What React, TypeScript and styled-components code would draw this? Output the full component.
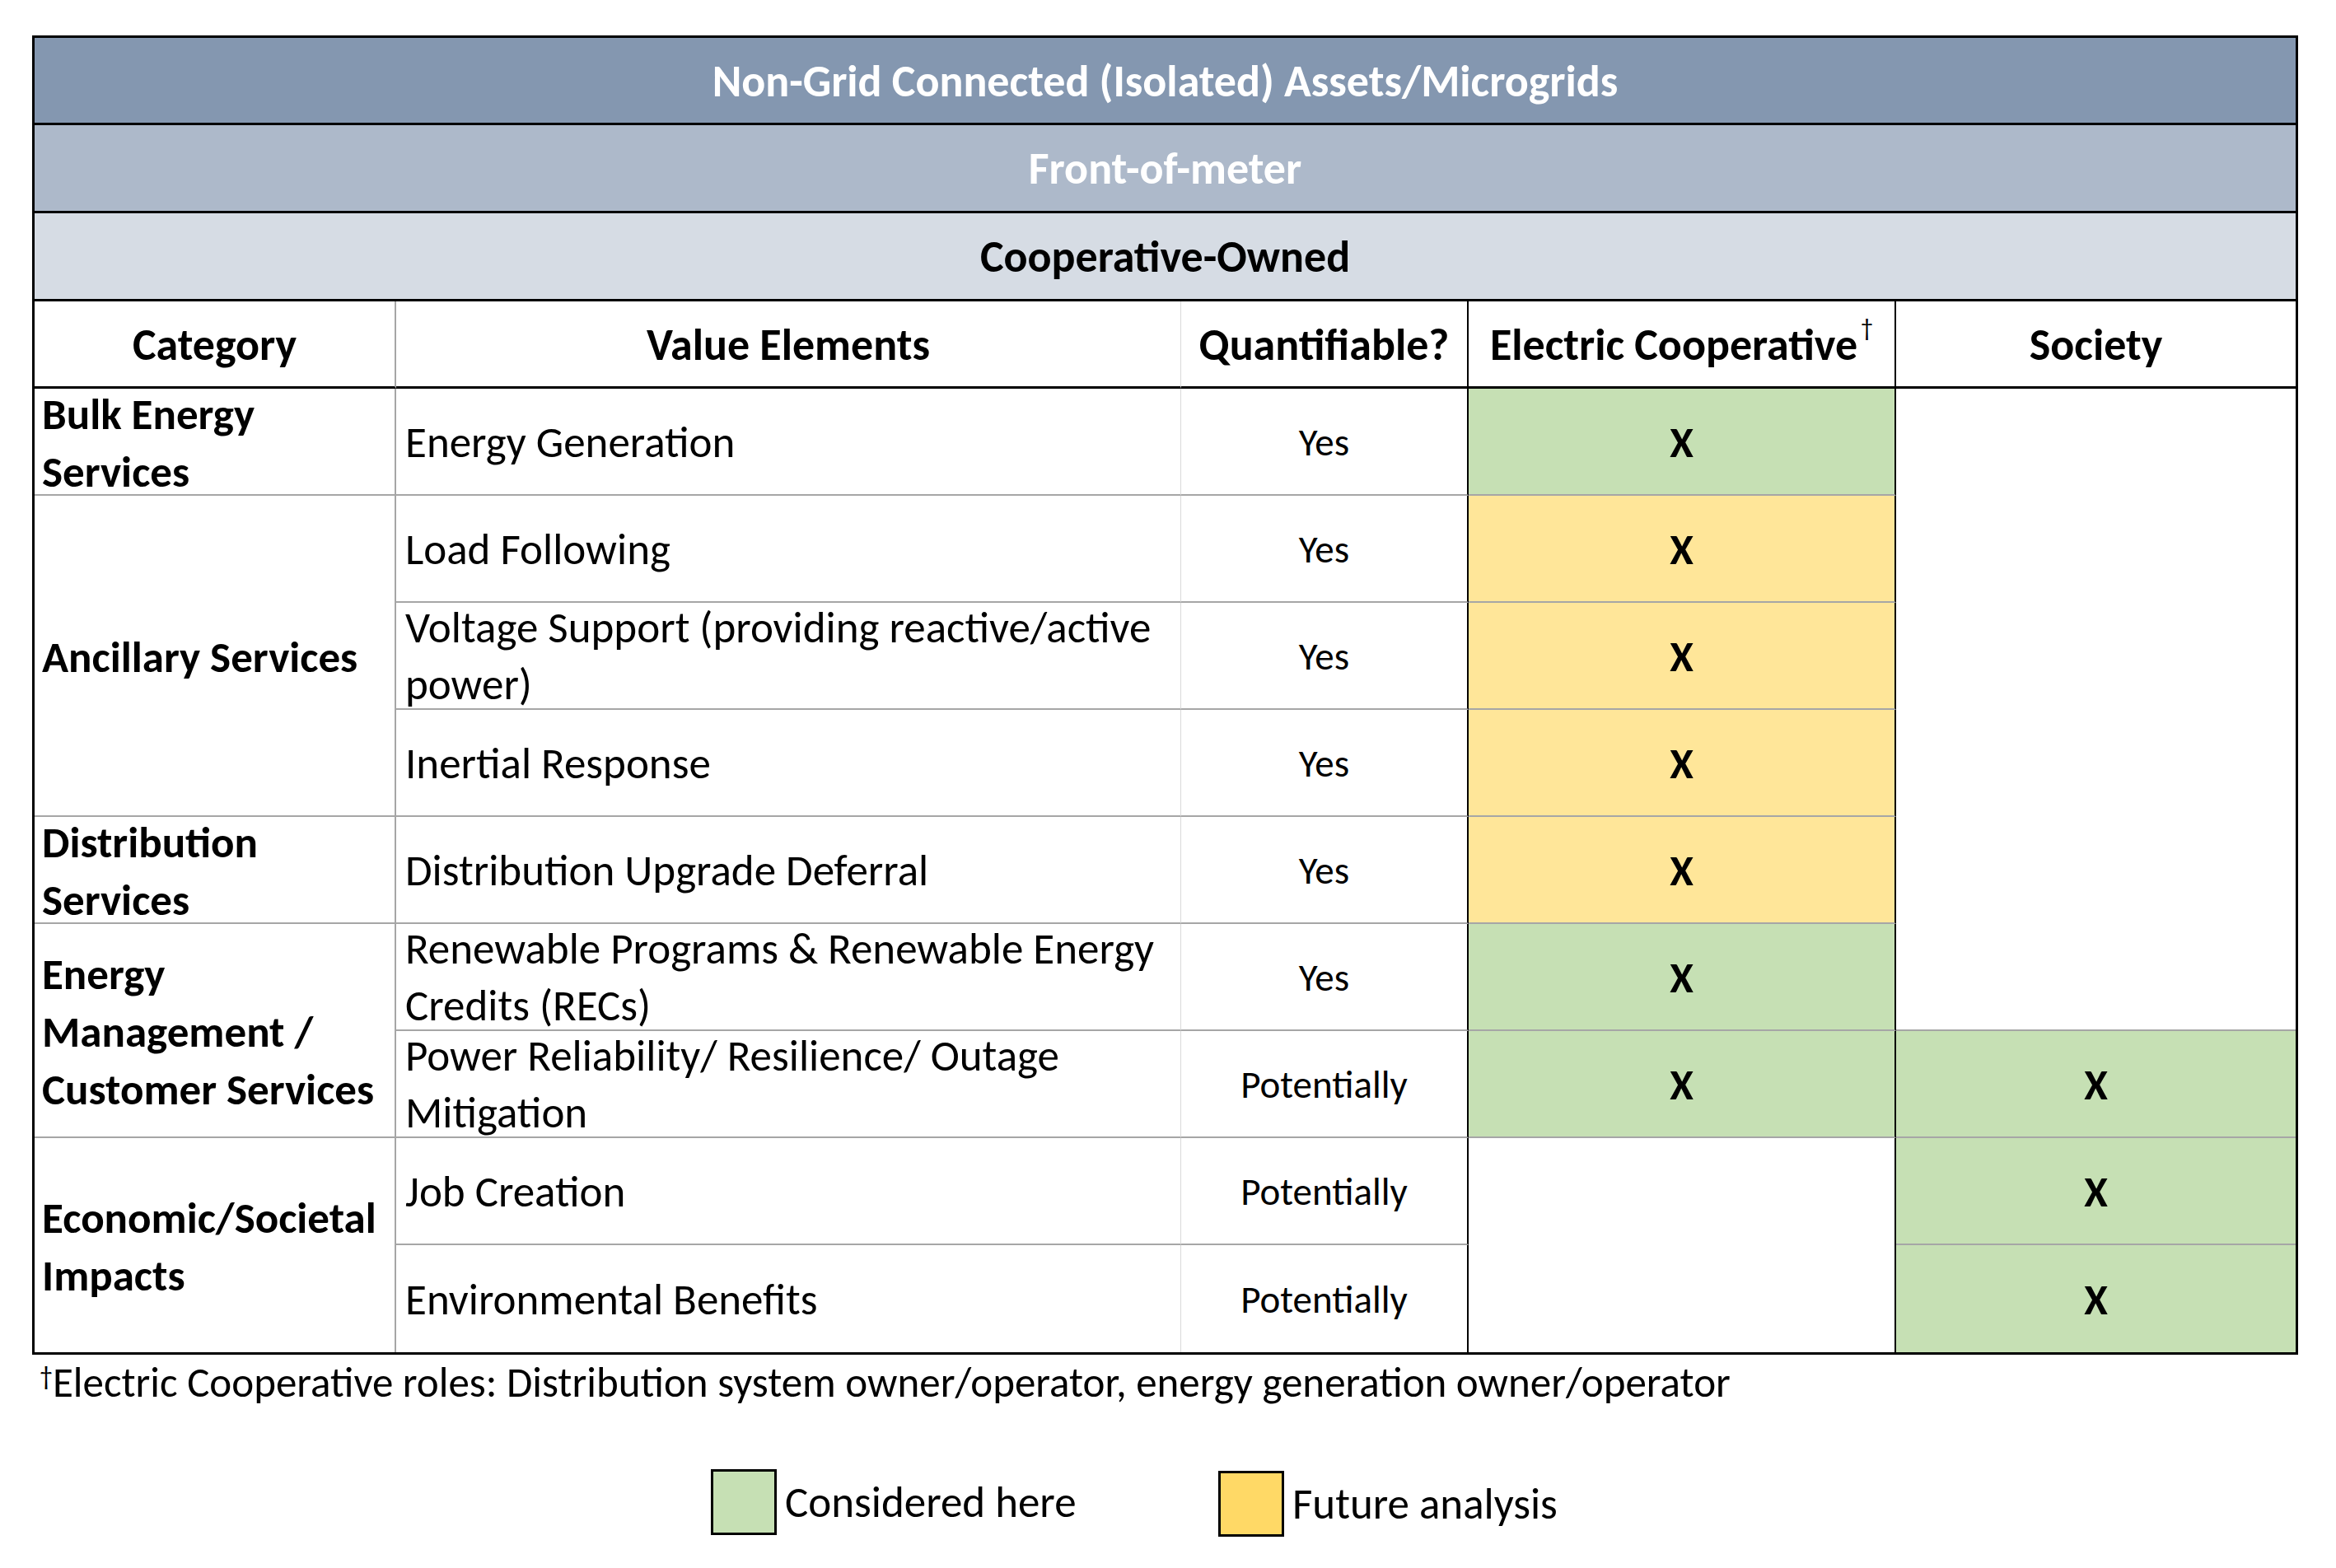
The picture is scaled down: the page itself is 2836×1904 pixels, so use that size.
import React from "react";
import styled, { createGlobalStyle } from "styled-components";

const FONT = `Carlito, Calibri, Lato, "Open Sans", sans-serif`;

const GRAY_LINE = "2px solid #a6a6a6";
const LIGHT_LINE = "1px solid #d9d9d9";
const BLACK_LINE = "2px solid #000000";
const BAND_LINE = "3px solid #000000";

const GREEN = "#c6e0b4";
const YELLOW = "#ffe699";

const GlobalStyle = createGlobalStyle`
  html, body {
    margin: 0;
    padding: 0;
    background: #ffffff;
  }
  body {
    font-family: ${FONT};
    color: #000000;
  }
`;

const Page = styled.div`
  width: 2836px;
  height: 1904px;
  box-sizing: border-box;
  padding: 43px 0 0 39px;
  overflow: hidden;
`;

const Table = styled.div`
  width: 2751px;
  box-sizing: border-box;
  display: grid;
  grid-template-columns: 439px 953px 349px 519px 485px;
  grid-template-rows: 106px 107px 107px 106px repeat(9, 130px);
  border: 3px solid #000000;
`;

const Band = styled.div<{ $bg: string; $color: string }>`
  grid-column: span 5;
  display: flex;
  align-items: center;
  justify-content: center;
  background: ${(p) => p.$bg};
  color: ${(p) => p.$color};
  border-bottom: ${BAND_LINE};
  box-sizing: border-box;
  font-size: 54px;
  font-weight: 700;
  padding-top: 2px;
`;

const Cell = styled.div<{
  $rows?: number;
  $right?: string;
  $bottom?: string;
  $bg?: string;
}>`
  grid-row: span ${(p) => p.$rows ?? 1};
  display: flex;
  align-items: center;
  box-sizing: border-box;
  min-width: 0;
  white-space: nowrap;
  background: ${(p) => p.$bg ?? "#ffffff"};
  border-right: ${(p) => p.$right ?? "none"};
  border-bottom: ${(p) => p.$bottom ?? "none"};
`;

const HeadCell = styled(Cell)`
  justify-content: center;
  font-size: 54px;
  font-weight: 700;
  padding-top: 3px;
  border-bottom: ${BAND_LINE};
`;

const CatCell = styled(Cell)`
  padding-left: 9px;
  padding-top: 3px;
  font-size: 53px;
  font-weight: 700;
  line-height: 70px;
  border-right: ${GRAY_LINE};
`;

const ValueCell = styled(Cell)`
  padding-left: 11px;
  padding-top: 2px;
  font-size: 53px;
  line-height: 69px;
  border-right: ${LIGHT_LINE};
`;

const QtyCell = styled(Cell)`
  justify-content: center;
  padding-top: 2px;
  font-size: 47px;
  border-right: ${BLACK_LINE};
`;

const MarkCell = styled(Cell)`
  justify-content: center;
  padding-top: 2px;
  font-size: 52px;
  font-weight: 700;
`;

const Sup = styled.span`
  font-size: 30px;
  font-weight: 400;
  position: relative;
  top: -22px;
  margin-left: 4px;
`;

const Footnote = styled.div`
  padding-left: 9px;
  font-size: 51px;
  line-height: 62px;
  margin-top: -4px;
  white-space: nowrap;
`;

const FootDagger = styled.span`
  font-size: 32px;
  vertical-align: 14px;
`;

const Legend = styled.div`
  display: grid;
  grid-template-columns: 616px auto;
  margin: 71px 0 0 824px;
`;

const LegendItem = styled.div<{ $shift: number }>`
  display: flex;
  align-items: center;
  gap: 10px;
  margin-top: ${(p) => p.$shift}px;
  font-size: 53px;
  white-space: nowrap;
`;

const Swatch = styled.div<{ $bg: string }>`
  width: 80px;
  height: 80px;
  flex: none;
  box-sizing: border-box;
  border: 3px solid #000000;
  background: ${(p) => p.$bg};
`;

type Fill = "green" | "yellow";

const fill = (f?: Fill) => (f === "green" ? GREEN : f === "yellow" ? YELLOW : undefined);

function Lines({ text }: { text: string[] }) {
  return (
    <div>
      {text.map((t, i) => (
        <React.Fragment key={i}>
          {i > 0 && <br />}
          {t}
        </React.Fragment>
      ))}
    </div>
  );
}

export default function App() {
  return (
    <>
      <GlobalStyle />
      <Page>
        <Table>
          <Band $bg="#8497b0" $color="#ffffff">
            Non-Grid Connected (Isolated) Assets/Microgrids
          </Band>
          <Band $bg="#adb9ca" $color="#ffffff">
            Front-of-meter
          </Band>
          <Band $bg="#d6dce4" $color="#000000">
            Cooperative-Owned
          </Band>

          <HeadCell $right={GRAY_LINE}>Category</HeadCell>
          <HeadCell $right={LIGHT_LINE}>Value Elements</HeadCell>
          <HeadCell $right={BLACK_LINE}>Quantifiable?</HeadCell>
          <HeadCell $right={BLACK_LINE}>
            Electric Cooperative<Sup>†</Sup>
          </HeadCell>
          <HeadCell>Society</HeadCell>

          {/* row 1 */}
          <CatCell $bottom={GRAY_LINE}>
            <Lines text={["Bulk Energy", "Services"]} />
          </CatCell>
          <ValueCell $bottom={GRAY_LINE}>
            <Lines text={["Energy Generation"]} />
          </ValueCell>
          <QtyCell $bottom={GRAY_LINE}>Yes</QtyCell>
          <MarkCell $bg={fill("green")} $right={BLACK_LINE} $bottom={GRAY_LINE}>
            X
          </MarkCell>
          <MarkCell $rows={6} $bottom={GRAY_LINE} />

          {/* rows 2-4 */}
          <CatCell $rows={3} $bottom={GRAY_LINE}>
            <Lines text={["Ancillary Services"]} />
          </CatCell>
          <ValueCell $bottom={GRAY_LINE}>
            <Lines text={["Load Following"]} />
          </ValueCell>
          <QtyCell $bottom={GRAY_LINE}>Yes</QtyCell>
          <MarkCell $bg={fill("yellow")} $right={BLACK_LINE} $bottom={GRAY_LINE}>
            X
          </MarkCell>

          <ValueCell $bottom={GRAY_LINE}>
            <Lines text={["Voltage Support (providing reactive/active", "power)"]} />
          </ValueCell>
          <QtyCell $bottom={GRAY_LINE}>Yes</QtyCell>
          <MarkCell $bg={fill("yellow")} $right={BLACK_LINE} $bottom={GRAY_LINE}>
            X
          </MarkCell>

          <ValueCell $bottom={GRAY_LINE}>
            <Lines text={["Inertial Response"]} />
          </ValueCell>
          <QtyCell $bottom={GRAY_LINE}>Yes</QtyCell>
          <MarkCell $bg={fill("yellow")} $right={BLACK_LINE} $bottom={GRAY_LINE}>
            X
          </MarkCell>

          {/* row 5 */}
          <CatCell $bottom={GRAY_LINE}>
            <Lines text={["Distribution", "Services"]} />
          </CatCell>
          <ValueCell $bottom={GRAY_LINE}>
            <Lines text={["Distribution Upgrade Deferral"]} />
          </ValueCell>
          <QtyCell $bottom={GRAY_LINE}>Yes</QtyCell>
          <MarkCell $bg={fill("yellow")} $right={BLACK_LINE} $bottom={GRAY_LINE}>
            X
          </MarkCell>

          {/* rows 6-7 */}
          <CatCell $rows={2} $bottom={GRAY_LINE}>
            <Lines text={["Energy", "Management /", "Customer Services"]} />
          </CatCell>
          <ValueCell $bottom={GRAY_LINE}>
            <Lines text={["Renewable Programs & Renewable Energy", "Credits (RECs)"]} />
          </ValueCell>
          <QtyCell $bottom={GRAY_LINE}>Yes</QtyCell>
          <MarkCell $bg={fill("green")} $right={BLACK_LINE} $bottom={GRAY_LINE}>
            X
          </MarkCell>

          <ValueCell $bottom={GRAY_LINE}>
            <Lines text={["Power Reliability/ Resilience/ Outage", "Mitigation"]} />
          </ValueCell>
          <QtyCell $bottom={GRAY_LINE}>Potentially</QtyCell>
          <MarkCell $bg={fill("green")} $right={BLACK_LINE} $bottom={GRAY_LINE}>
            X
          </MarkCell>
          <MarkCell $bg={fill("green")} $bottom={GRAY_LINE}>
            X
          </MarkCell>

          {/* rows 8-9 */}
          <CatCell $rows={2}>
            <Lines text={["Economic/Societal", "Impacts"]} />
          </CatCell>
          <ValueCell $bottom={GRAY_LINE}>
            <Lines text={["Job Creation"]} />
          </ValueCell>
          <QtyCell $bottom={GRAY_LINE}>Potentially</QtyCell>
          <MarkCell $rows={2} $right={BLACK_LINE} />
          <MarkCell $bg={fill("green")} $bottom={GRAY_LINE}>
            X
          </MarkCell>

          <ValueCell>
            <Lines text={["Environmental Benefits"]} />
          </ValueCell>
          <QtyCell>Potentially</QtyCell>
          <MarkCell $bg={fill("green")}>X</MarkCell>
        </Table>

        <Footnote>
          <FootDagger>†</FootDagger>
          Electric Cooperative roles: Distribution system owner/operator, energy generation owner/operator
        </Footnote>

        <Legend>
          <LegendItem $shift={0}>
            <Swatch $bg="#c6e0b4" />
            Considered here
          </LegendItem>
          <LegendItem $shift={5}>
            <Swatch $bg="#ffd966" />
            Future analysis
          </LegendItem>
        </Legend>
      </Page>
    </>
  );
}
